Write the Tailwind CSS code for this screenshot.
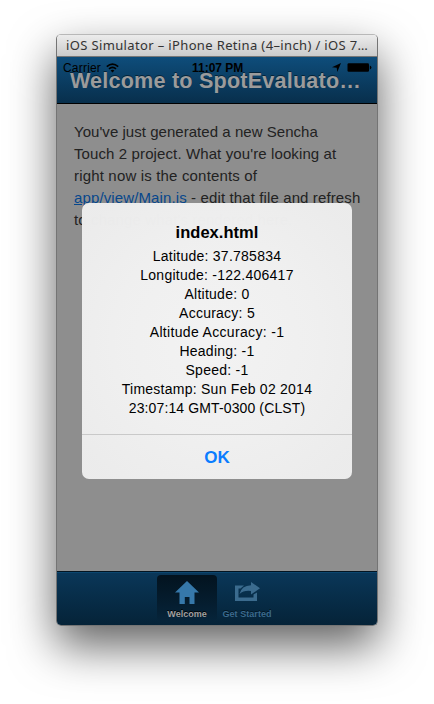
<!DOCTYPE html>
<html lang="en">
<head>
<meta charset="utf-8">
<title>iOS Simulator</title>
<script src="https://cdn.jsdelivr.net/npm/@tailwindcss/browser@4"></script>
</head>
<body class="bg-white w-[434px] h-[704px] overflow-hidden pl-14 pt-[34px] font-['Liberation_Sans',Arial,sans-serif]">
<div class="relative w-[322px] h-[592px] rounded-[5px] border border-[#747474] border-t-[#b8b8b8] overflow-visible shadow-[0_20px_46px_rgba(0,0,0,0.62)] flex flex-col">
  <div class="h-[22px] shrink-0 rounded-t-[4px] border-b border-[#777] bg-linear-to-b from-[#ececec] to-[#cbcbcb] pl-[9px] pt-px flex items-center whitespace-nowrap text-[13px] text-[#333] font-['Noto_Sans',sans-serif]"><span class="tracking-[0.36px]">iOS Simulator – iPhone Retina (4–inch) / iOS 7…</span></div>
  <div class="h-[47px] shrink-0 relative border-b border-black bg-linear-to-b from-[#0e4d7b] to-[#082f4c] pt-[8px] text-center whitespace-nowrap">
    <h1 class="text-[21.6px] leading-[32px] font-bold text-[#9b9b9b] pr-[3px] [text-shadow:0_-1px_0_#05243a]"><span class="tracking-[0.2px]">Welcome to SpotEvaluato…</span></h1>
    <div class="absolute inset-x-0 top-[3px] h-4 flex items-center text-xs leading-4 text-black">
      <span class="ml-[6px] tracking-[0.2px]">Carrier</span>
      <svg class="ml-[5px]" width="13" height="10" viewBox="0 0 13 10" fill="none" stroke="#000" stroke-width="1.7"><path d="M.8 3.6Q6.5-1.2 12.2 3.6M3 5.9Q6.5 3 10 5.9"/><path d="M4.6 7.4Q6.5 6 8.4 7.4L6.5 9.4Z" fill="#000" stroke="none"/></svg>
      <span class="absolute left-[135px] font-bold">11:07 PM</span>
      <svg class="absolute left-[275px] top-[3px]" width="10" height="9" viewBox="0 0 10 9"><path d="M9 0 5.3 9 4.7 4.8 0 4.3Z"/></svg>
      <svg class="absolute left-[290px] top-[3px]" width="25" height="9" viewBox="0 0 25 9"><rect x=".5" y=".3" width="21.5" height="8.4" rx="1.3"/><path d="M22.8 2.6q1.6.4 1.6 1.9t-1.6 1.9Z"/></svg>
    </div>
  </div>
  <main class="grow bg-[#8e8e8e] pl-[17px] pt-[17px] text-[15px] leading-[22px] text-[#222] whitespace-nowrap">
    <div class="tracking-[0.04px]">You've just generated a new Sencha</div>
    <div class="tracking-[0.11px]">Touch 2 project. What you're looking at</div>
    <div class="tracking-[0.17px]">right now is the contents of</div>
    <div class="tracking-[0.12px]"><a class="text-[#07478c] underline">app/view/Main.js</a> - edit that file and refresh</div>
    <div class="tracking-[0.12px]">to change what's rendered here.</div>
  </main>
  <nav class="h-[54px] shrink-0 rounded-b-[4px] border-t border-[#031522] bg-linear-to-b from-[#0a3759] to-[#052338] shadow-[inset_0_1px_0_#0b466f] flex pl-[100px] pt-[3px] text-[9px] font-bold leading-[10px] text-center">
    <div class="w-[60px] h-[46px] rounded-[4px] bg-linear-to-b from-[#03131f] to-[#06243a] flex flex-col items-center pt-[6px] text-[#a0a0a0]">
      <svg width="24" height="23" viewBox="0 0 24 23" fill="#3678aa"><path d="M12 0 24 11.5H19.5V23H14.5V16H9.8V23H4.5V11.5H0Z"/></svg>
      <span class="mt-[5px] [text-shadow:0_-1px_0_#000]">Welcome</span>
    </div>
    <div class="w-[60px] flex flex-col items-center pt-[6px] text-[#3b6b8e] whitespace-nowrap">
      <svg width="25" height="23" viewBox="0 0 25 23" fill="#3b6b8e"><path d="M0 4.5H9L5.5 7.5H3.5V16.5H18.5V13.5L22 11.5V20H0Z"/><path d="M4.5 13Q6.5 4.5 16 4.2V1L25 7.3 16 13.5V10Q9 9 4.5 13Z"/></svg>
      <span class="mt-[5px] tracking-[0.06px] [text-shadow:0_-1px_0_#031522]">Get Started</span>
    </div>
  </nav>
  <div role="dialog" class="absolute left-[25px] top-[168px] w-[270px] h-[276px] rounded-[7px] bg-[radial-gradient(circle_at_center,rgba(244,244,244,0.985)_0%,rgba(241,241,241,0.985)_50%,rgba(237,237,237,0.985)_90%)] flex flex-col text-center text-black">
    <div class="h-[232px] border-b border-[#c9c9c9] pt-[19px]">
      <h2 class="text-[16.5px] leading-[21px] font-bold tracking-[0.04px]">index.html</h2>
      <div class="mt-[4px] text-[14px] leading-[19px] tracking-[0.25px]">
        <div>Latitude: 37.785834</div>
        <div>Longitude: -122.406417</div>
        <div>Altitude: 0</div>
        <div>Accuracy: 5</div>
        <div class="tracking-[0.33px]">Altitude Accuracy: -1</div>
        <div>Heading: -1</div>
        <div>Speed: -1</div>
        <div>Timestamp: Sun Feb 02 2014</div>
        <div class="tracking-[0.12px]">23:07:14 GMT-0300 (CLST)</div>
      </div>
    </div>
    <div class="grow flex items-center justify-center pt-px text-[17px] font-bold text-[#0a7cff]">OK</div>
  </div>
</div>
</body>
</html>
